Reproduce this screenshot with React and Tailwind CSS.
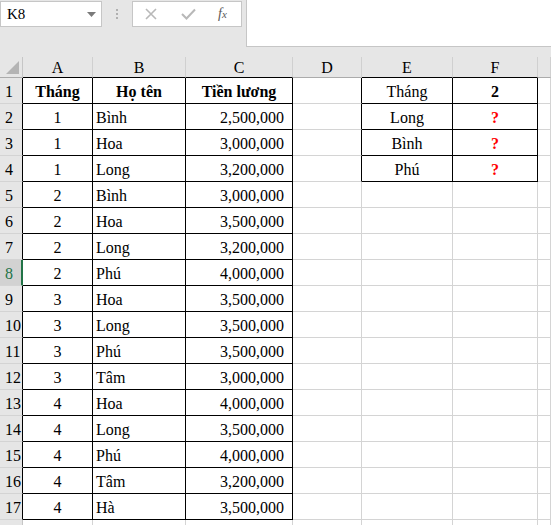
import React from 'react';

const cols = 'grid grid-cols-[23px_70px_93px_107px_69px_91px_85px_1fr]';

const data = [
  [1, 'Bình', '2,500,000'],
  [1, 'Hoa', '3,000,000'],
  [1, 'Long', '3,200,000'],
  [2, 'Bình', '3,000,000'],
  [2, 'Hoa', '3,500,000'],
  [2, 'Long', '3,200,000'],
  [2, 'Phú', '4,000,000'],
  [3, 'Hoa', '3,500,000'],
  [3, 'Long', '3,500,000'],
  [3, 'Phú', '3,500,000'],
  [3, 'Tâm', '3,000,000'],
  [4, 'Hoa', '4,000,000'],
  [4, 'Long', '3,500,000'],
  [4, 'Phú', '4,000,000'],
  [4, 'Tâm', '3,200,000'],
  [4, 'Hà', '3,500,000'],
];

const lookup = { 1: ['Tháng', '2'], 2: ['Long', '?'], 3: ['Bình', '?'], 4: ['Phú', '?'] };

function Cell({ children, right, bottom, className = '' }) {
  return (
    <div
      className={`h-[26px] flex items-center pt-[2px] border-r border-b ${right ? 'border-r-black' : 'border-r-[#d4d4d4]'} ${bottom ? 'border-b-black' : 'border-b-[#d4d4d4]'} ${className}`}
    >
      {children}
    </div>
  );
}

function Row({ n }) {
  const inMain = n <= 17;
  const inSide = n <= 4;
  const d = n >= 2 && n <= 17 ? data[n - 2] : null;
  const side = lookup[n];
  const active = n === 8;
  return (
    <div className={cols}>
      <div
        className={`h-[26px] flex items-center pl-[5px] pt-[2px] border-b border-b-[#d4d4d4] ${
          active
            ? 'bg-[#d2d2d2] text-[#217346] border-r-2 border-r-[#217346]'
            : inMain
            ? 'bg-[#e6e6e6] text-black border-r border-r-black'
            : 'bg-[#e6e6e6] text-black border-r border-r-[#c6c6c6]'
        }`}
      >
        {inMain ? n : null}
      </div>
      {n === 1 ? (
        <>
          <Cell right bottom className="justify-center font-bold">Tháng</Cell>
          <Cell right bottom className="justify-center font-bold">Họ tên</Cell>
          <Cell right bottom className="justify-center font-bold">Tiền lương</Cell>
        </>
      ) : d ? (
        <>
          <Cell right bottom className="justify-center">{d[0]}</Cell>
          <Cell right bottom className="pl-[3px]">{d[1]}</Cell>
          <Cell right bottom className="justify-end pr-[8px]">{d[2]}</Cell>
        </>
      ) : (
        <>
          <Cell />
          <Cell />
          <Cell />
        </>
      )}
      <Cell right={inSide} />
      <Cell right={inSide} bottom={inSide} className="justify-center">
        {side ? side[0] : null}
      </Cell>
      <Cell
        right={inSide}
        bottom={inSide}
        className={`justify-center font-bold ${n === 1 ? 'text-black' : 'text-[#ff0000]'}`}
      >
        {side ? side[1] : null}
      </Cell>
      <Cell />
    </div>
  );
}

export default function App() {
  const letters = ['A', 'B', 'C', 'D', 'E', 'F', ''];
  return (
    <div className="w-[551px] h-[525px] overflow-hidden bg-white text-[16px] leading-none text-black font-[Liberation_Serif,serif]">
      {/* formula bar */}
      <div className="h-[57px] bg-[#e6e6e6] flex items-start">
        <div className="mt-[1px] w-[102px] h-[26px] bg-white border border-[#c6c6c6] flex items-center justify-between pl-[6px] pr-[5px] text-[15px]">
          <span>K8</span>
          <svg width="9" height="5" viewBox="0 0 9 5">
            <path d="M0 0h9L4.5 5z" fill="#7a7a7a" />
          </svg>
        </div>
        <div className="w-[30px] h-[28px] flex flex-col items-center justify-center gap-[2px]">
          <span className="w-[2px] h-[2px] bg-[#b0b0b0]" />
          <span className="w-[2px] h-[2px] bg-[#b0b0b0]" />
          <span className="w-[2px] h-[2px] bg-[#b0b0b0]" />
        </div>
        <div className="mt-[1px] w-[110px] h-[26px] bg-white border border-[#c6c6c6] flex items-center">
          <svg className="ml-[12px]" width="12" height="12" viewBox="0 0 12 12">
            <path d="M1 1l10 10M11 1L1 11" stroke="#b8b8b8" strokeWidth="1.6" fill="none" />
          </svg>
          <svg className="ml-[24px]" width="15" height="12" viewBox="0 0 15 12">
            <path d="M1 6l4.5 4.5L14 1.5" stroke="#b8b8b8" strokeWidth="2" fill="none" />
          </svg>
          <span className="ml-[22px] italic text-[14px] text-[#595959]">
            f<span className="text-[11px]">x</span>
          </span>
        </div>
        <div className="ml-[4px] flex-1 h-[47px] bg-white border-l border-b border-[#c6c6c6]" />
      </div>

      {/* column headers */}
      <div className={`${cols} h-[21px] bg-[#e6e6e6]`}>
        <div className="border-r border-r-[#c6c6c6] border-b border-b-[#ababab] flex items-end justify-end pr-[3px] pb-[3px]">
          <svg width="13" height="13" viewBox="0 0 13 13">
            <path d="M13 0V13H0z" fill="#b4b4b4" />
          </svg>
        </div>
        {letters.map((l, i) => (
          <div
            key={i}
            className={`flex items-center justify-center pt-[2px] border-r border-r-[#d0d0d0] border-b ${
              i === 3 || i === 6 ? 'border-b-[#ababab]' : 'border-b-black'
            }`}
          >
            {l}
          </div>
        ))}
      </div>

      {Array.from({ length: 18 }, (_, i) => (
        <Row key={i} n={i + 1} />
      ))}
    </div>
  );
}
